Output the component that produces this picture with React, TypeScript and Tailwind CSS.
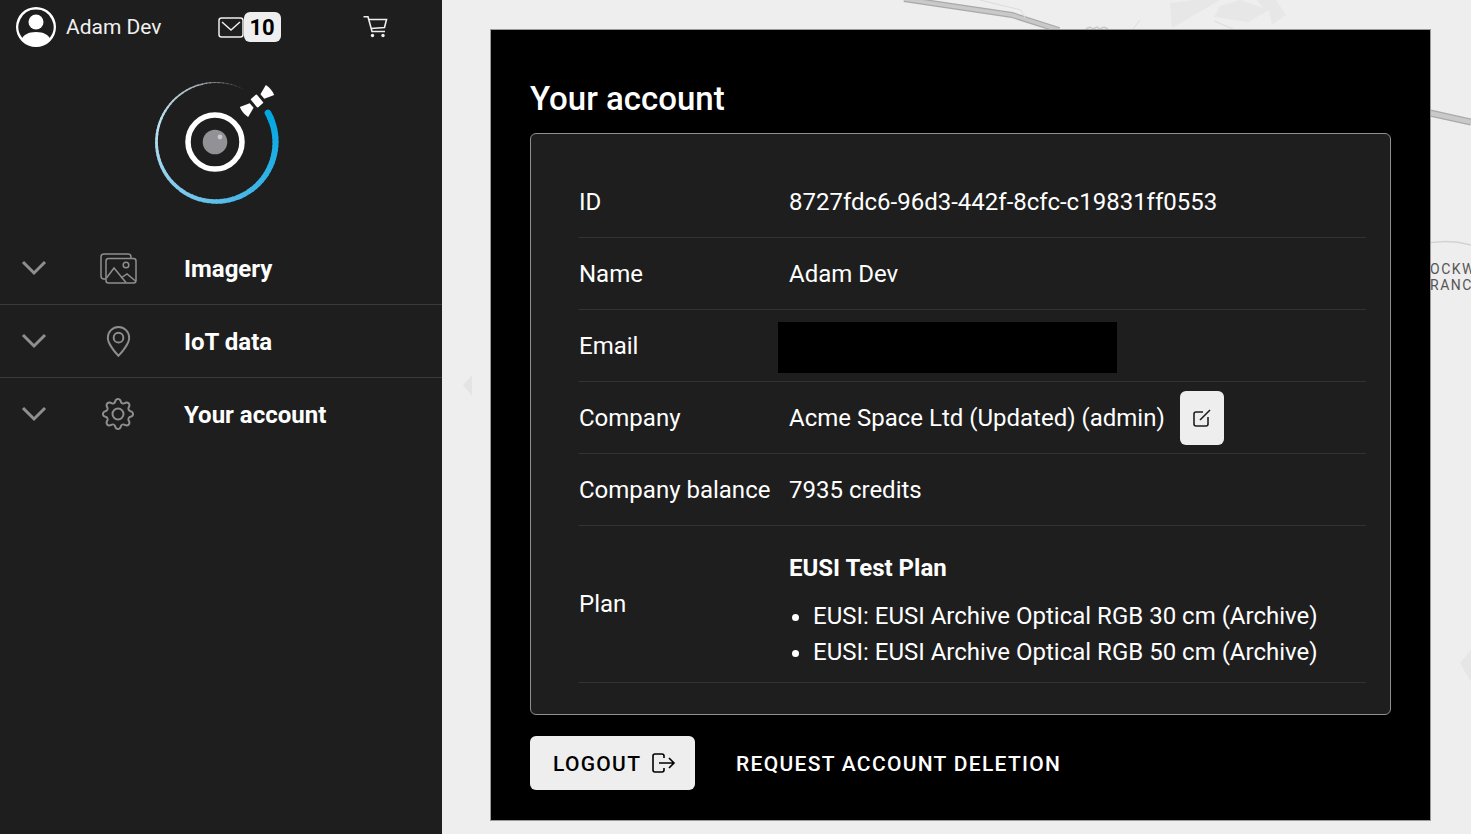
import React from 'react';
import { BsGear, BsGeoAlt, BsPersonCircle } from 'react-icons/bs';

const rows = [
  { label: 'ID', value: '8727fdc6-96d3-442f-8cfc-c19831ff0553' },
  { label: 'Name', value: 'Adam Dev' },
];

const ImagesIcon = () => (
  <svg width="37" height="31" viewBox="0 0 37 31" fill="none" stroke="#8f8f8f" strokeWidth="1.5">
    <path d="M31 5 V4 Q31 1 28 1 H4 Q1 1 1 4 V23 Q1 26 4 26 H6" />
    <rect x="6" y="5.5" width="30" height="24.5" rx="2.5" />
    <path d="M6.5 25 L14 15 L26 29.5" />
    <path d="M21 25 L27 21 L35.5 28" />
    <circle cx="26" cy="12" r="2.8" />
  </svg>
);

const navItems = [
  { label: 'Imagery', icon: <ImagesIcon />, rowClass: 'h-[73px] border-b border-[#3a3a3a]' },
  { label: 'IoT data', icon: <BsGeoAlt className="w-[31px] h-[31px] text-[#8f8f8f]" />, rowClass: 'h-[73px] border-b border-[#3a3a3a]' },
  { label: 'Your account', icon: <BsGear className="w-[32px] h-[32px] text-[#8f8f8f]" />, rowClass: 'h-[71px]' },
];

const mix = (a: number[], b: number[], t: number) => {
  const c = a.map((v, i) => Math.round(v + (b[i] - v) * t));
  return `rgb(${c[0]},${c[1]},${c[2]})`;
};

// Outer ring of the logo: gets thicker and bluer along the sweep
const ringSegments = Array.from({ length: 80 }, (_, i) => {
  const t = i / 80;
  const a0 = ((-62 - t * 326) * Math.PI) / 180;
  const a1 = ((-62 - ((i + 1.3) / 80) * 326) * Math.PI) / 180;
  const r = 59.5;
  const d = `M${60 + r * Math.cos(a0)} ${60 + r * Math.sin(a0)}A${r} ${r} 0 0 0 ${60 + r * Math.cos(a1)} ${60 + r * Math.sin(a1)}`;
  const color =
    t < 0.3 ? mix([150, 150, 150], [190, 225, 240], t / 0.3) : t < 0.7 ? mix([190, 225, 240], [74, 184, 232], (t - 0.3) / 0.4) : mix([74, 184, 232], [0, 166, 224], (t - 0.7) / 0.3);
  const opacity = t < 0.15 ? 0.15 + (t / 0.15) * 0.85 : 1;
  const width = t < 0.36 ? 0.6 + t * 6 : 2.8 + (t - 0.36) * 6;
  return { d, color, opacity, width };
});

const Logo = () => (
  <svg width="132" height="132" viewBox="0 0 132 132" className="block">
    <g transform="translate(1 8)">
      {ringSegments.map((s, i) => (
        <path key={i} d={s.d} fill="none" stroke={s.color} strokeOpacity={s.opacity} strokeWidth={s.width} strokeLinecap={i === 79 ? 'round' : 'butt'} />
      ))}
      <circle cx="59" cy="60" r="27" fill="none" stroke="#fff" strokeWidth="5.5" />
      <circle cx="59" cy="60" r="12.3" fill="#929296" />
      <circle cx="64" cy="55" r="2.4" fill="#c9c9cc" />
      <g transform="translate(101 19) rotate(-40)" fill="#fff">
        <rect x="-4" y="-5.5" width="8" height="11" rx="1" />
        <path d="M-7 -3 L-17 -6.5 Q-19 0 -17 6.5 L-7 3 Z" />
        <path d="M7 -3 L17 -6.5 Q19 0 17 6.5 L7 3 Z" />
      </g>
    </g>
  </svg>
);

const MapBackground = () => (
  <svg className="absolute inset-0 w-full h-full" viewBox="0 0 1029 834" preserveAspectRatio="none">
    <g transform="translate(-442 0)">
      <path d="M1170 3 L1193 0 L1220 0 L1172 28 Z M1214 17 L1248 22 L1269 10 L1272 25 L1286 15 L1276 0 L1257 0 L1263 8 L1240 0 L1220 6 Z" fill="#e7e7e7" />
      <path d="M904 -1 L1012 15 L1059 30" fill="none" stroke="#a9a9a9" strokeWidth="6" />
      <path d="M904 -1 L1012 15 L1059 30" fill="none" stroke="#c9c9c9" strokeWidth="3.5" />
      <path d="M980 0 L1021 10 L1025 18" fill="none" stroke="#dcdcdc" strokeWidth="1" />
      <path d="M1086 29 L1090 27 L1093 29 L1097 27 L1100 29 L1104 27 L1108 29" fill="none" stroke="#c9c9c9" strokeWidth="1.5" />
      <path d="M1133 29 L1140 20 M1214 21 L1233 29" fill="none" stroke="#dcdcdc" strokeWidth="1" />
      <path d="M1430 113 L1471 122" fill="none" stroke="#a9a9a9" strokeWidth="7" />
      <path d="M1430 113 L1471 122" fill="none" stroke="#c9c9c9" strokeWidth="4.5" />
      <path d="M1420 245 Q1445 238 1471 245" fill="none" stroke="#d2d2d2" strokeWidth="1.5" />
      <path d="M463 385 L472 375 L472 396 Z" fill="#e4e4e4" />
      <path d="M1471 650 L1460 663 L1471 682 Z" fill="#e6e6e6" />
    </g>
  </svg>
);

export default function App() {
  return (
    <div className="flex h-screen w-full overflow-hidden font-['Roboto',sans-serif]">
      {/* Sidebar */}
      <aside className="w-[442px] shrink-0 bg-[#1e1e1e] text-white">
        <div className="flex items-center h-[54px] pl-4">
          <BsPersonCircle className="w-10 h-10 text-white" />
          <span className="ml-[10px] text-[21px] leading-[28px] text-[#f0f0f0]">Adam Dev</span>
          <svg width="26" height="21" viewBox="0 0 26 21" fill="none" stroke="#eeeeee" strokeWidth="1.5" className="ml-[56px]">
            <rect x="1" y="1" width="24" height="19" rx="2.5" />
            <path d="M4 5 L13 13 L22 5" />
          </svg>
          <span className="flex items-center justify-center w-[37px] h-[30px] rounded-md bg-[#eeeeee] text-black text-[22px] font-bold">10</span>
          <svg width="25" height="22" viewBox="0 0 25 22" fill="none" stroke="#eeeeee" strokeWidth="1.6" className="ml-[82px]">
            <path d="M0.5 0.8 H5 L9 15.5 H22" />
            <path d="M6 3.5 H23.5 L21.5 11.5 L8 12.5" />
            <circle cx="9.5" cy="19.5" r="1.7" fill="#eeeeee" stroke="none" />
            <circle cx="20" cy="19.5" r="1.7" fill="#eeeeee" stroke="none" />
          </svg>
        </div>
        <div className="flex justify-center pt-[20px] pr-[1px] h-[178px]">
          <Logo />
        </div>
        <nav>
          {navItems.map((item) => (
            <div key={item.label} className={`flex items-center ${item.rowClass}`}>
              <svg width="26" height="16" viewBox="0 0 26 16" className="ml-[21px] shrink-0">
                <path d="M2 2 L13 13 L24 2" fill="none" stroke="#8f8f8f" strokeWidth="3" />
              </svg>
              <div className="w-[42px] ml-[50px] flex justify-center">{item.icon}</div>
              <span className="ml-[45px] pt-[2px] text-[24px] font-bold text-white">{item.label}</span>
            </div>
          ))}
        </nav>
      </aside>

      {/* Main */}
      <main className="relative flex-1 bg-[#eeeeee] pt-[29px] pl-[48px] pr-[40px] pb-[13px]">
        <MapBackground />
        <div className="absolute right-0 top-[261px] w-[41px] overflow-hidden text-[14px] leading-[16px] tracking-[1.5px] text-[#555555] whitespace-nowrap">
          <div>OCKW</div>
          <div>RANC</div>
        </div>

        <section className="relative w-[941px] h-[792px] bg-black border border-[#9a9a9a] px-[39px] pt-[49px] text-white">
          <h1 className="text-[33px] leading-[40px] font-medium">Your account</h1>
          <div className="mt-[14px] w-[861px] h-[582px] rounded-md border border-[#8f8f8f] bg-[#1e1e1e] pl-[48px] pr-[24px] pt-[32px] text-[24px]">
            {rows.map((row) => (
              <div key={row.label} className="flex items-center h-[72px] border-b border-[#333333]">
                <div className="w-[210px]">{row.label}</div>
                <div>{row.value}</div>
              </div>
            ))}
            <div className="flex items-center h-[72px] border-b border-[#333333]">
              <div className="w-[199px]">Email</div>
              <div className="w-[339px] h-[51px] mt-[3px] bg-black" />
            </div>
            <div className="flex items-center h-[72px] border-b border-[#333333]">
              <div className="w-[210px]">Company</div>
              <div>Acme Space Ltd (Updated) (admin)</div>
              <button className="ml-[15px] flex items-center justify-center w-[44px] h-[54px] rounded-md bg-[#eeeeee]">
                <svg width="20" height="20" viewBox="0 0 20 20" fill="none" stroke="#1e1e1e" strokeWidth="1.6">
                  <path d="M11 4 H4 Q2 4 2 6 V16 Q2 18 4 18 H14 Q16 18 16 16 V9" />
                  <path d="M8 12 L18 2" />
                </svg>
              </button>
            </div>
            <div className="flex items-center h-[72px] border-b border-[#333333]">
              <div className="w-[210px]">Company balance</div>
              <div>7935 credits</div>
            </div>
            <div className="flex items-center h-[157px] border-b border-[#333333]">
              <div className="w-[210px]">Plan</div>
              <div className="pt-[12px]">
                <div className="font-bold leading-[36px] mb-[12px]">EUSI Test Plan</div>
                <ul className="list-disc pl-[24px] leading-[36px]">
                  <li>EUSI: EUSI Archive Optical RGB 30 cm (Archive)</li>
                  <li>EUSI: EUSI Archive Optical RGB 50 cm (Archive)</li>
                </ul>
              </div>
            </div>
          </div>
          <div className="flex items-center mt-[21px]">
            <button className="flex items-center justify-start pl-[23px] w-[165px] h-[54px] rounded-md bg-[#eeeeee] text-black text-[21px] font-medium tracking-[1.3px]">
              <span className="pt-[3px]">LOGOUT</span>
              <svg width="24" height="20" viewBox="0 0 24 20" fill="none" stroke="#000" strokeWidth="1.6" className="ml-[11px]">
                <path d="M12 5 V3 Q12 1 10 1 H3 Q1 1 1 3 V17 Q1 19 3 19 H10 Q12 19 12 17 V15" />
                <path d="M7 10 H22 M17 5 L22 10 L17 15" />
              </svg>
            </button>
            <span className="ml-[41px] pt-[3px] text-[21px] font-medium tracking-[1.3px]">REQUEST ACCOUNT DELETION</span>
          </div>
        </section>
      </main>
    </div>
  );
}
